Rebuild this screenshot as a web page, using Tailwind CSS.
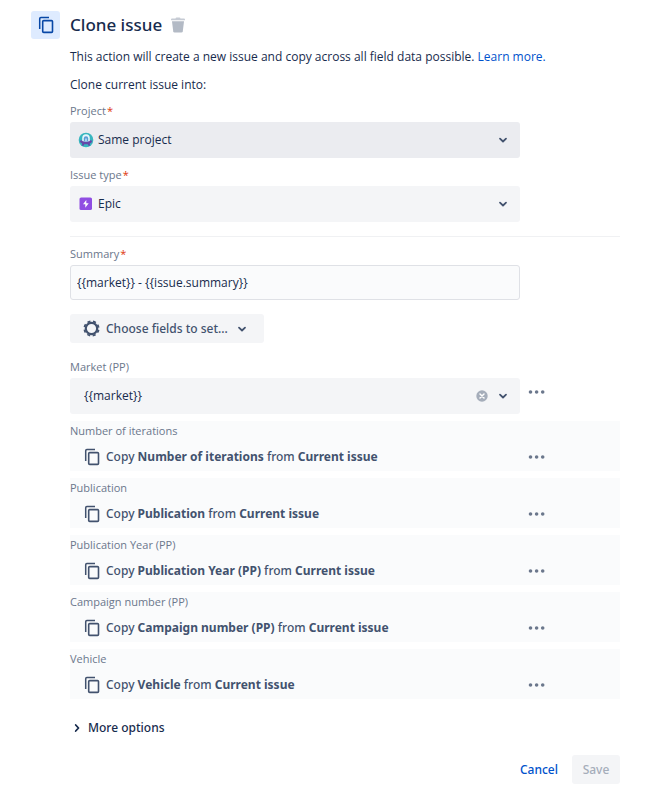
<!DOCTYPE html>
<html lang="en">
<head>
    <meta charset="UTF-8">
    <meta name="viewport" content="width=device-width, initial-scale=1.0">
    <title>Clone issue</title>
    <script src="https://cdn.jsdelivr.net/npm/@tailwindcss/browser@4"></script>
</head>
<body class="bg-white font-['Open_Sans','Noto_Sans',sans-serif] text-[12px] leading-5 text-[#172b4d]">

    <!-- Shared icons -->
    <svg class="hidden">
        <symbol id="copy" viewBox="0 0 16 18">
            <path d="M1.7 13V2.8Q1.7 1.6 2.9 1.6H11" fill="none" stroke="currentColor" stroke-width="1.5"/>
            <rect x="4.7" y="4.6" width="9.8" height="11.8" rx="1" fill="none" stroke="currentColor" stroke-width="1.6"/>
        </symbol>
        <symbol id="chevron" viewBox="0 0 10 10">
            <path d="M2 3.7L5 6.5L8 3.7" fill="none" stroke="currentColor" stroke-width="1.8" stroke-linecap="round" stroke-linejoin="round"/>
        </symbol>
        <symbol id="dots" viewBox="0 0 18 6">
            <circle cx="2.5" cy="3" r="1.8" fill="currentColor"/>
            <circle cx="8.6" cy="3" r="1.8" fill="currentColor"/>
            <circle cx="14.7" cy="3" r="1.8" fill="currentColor"/>
        </symbol>
    </svg>

    <form class="flex gap-[10px] pt-[11px] pr-7 pb-7 pl-[31px]">
        <div class="flex h-7 w-[29px] shrink-0 items-center justify-center rounded-[3px] bg-[#deebff] text-[#0747a6]">
            <svg class="h-[18px] w-4"><use href="#copy"/></svg>
        </div>

        <div class="min-w-0 flex-1">
            <div class="flex h-7 items-center gap-2">
                <h1 class="font-['Noto_Sans',sans-serif] text-[17px] font-medium">Clone issue</h1>
                <button type="button" aria-label="Delete" class="text-[#b3bac5]">
                    <svg class="h-4 w-4" viewBox="0 0 16 16" fill="currentColor">
                        <path d="M1 2.5Q1 1.5 2 1.5H5.5Q5.8 .5 6.5 .5H9.5Q10.2 .5 10.5 1.5H14Q15 1.5 15 2.5V3.3H1z" opacity=".75"/>
                        <path d="M2 4.3H14L12.8 14.3Q12.6 15.5 11.4 15.5H4.6Q3.4 15.5 3.2 14.3z"/>
                    </svg>
                </button>
            </div>

            <p class="mt-2">This action will create a new issue and copy across all field data possible. <a href="#" class="text-[#0052cc]">Learn more.</a></p>
            <p class="mt-2">Clone current issue into:</p>

            <!-- Target project and type -->
            <div class="mt-2 max-w-[450px]">
                <label for="project" class="mb-[3px] block text-[11px] leading-4 text-[#6b778c]">Project<span class="ml-px text-[#de350b]">*</span></label>
                <div class="relative">
                    <select id="project" class="block h-9 w-full appearance-none rounded-[3px] bg-[#ebecf0] pr-8 pl-7">
                        <option>Same project</option>
                    </select>
                    <svg class="pointer-events-none absolute top-[10px] left-2 h-4 w-4" viewBox="0 0 16 16">
                        <circle cx="8" cy="8" r="7.3" fill="#38b6bf"/>
                        <path d="M1.8 8.8Q8 6.8 14.2 8.8Q14 11 11.8 11.5L12 13.8H10.4L9.8 12.3H6.2L5.6 13.8H4L4.2 11.5Q2 11 1.8 8.8z" fill="#6647a8"/>
                        <path d="M4.2 9V6Q4.2 2.2 8 2.2T11.8 6V9Q8 10.6 4.2 9z" fill="#e5f6fa"/>
                        <path d="M5.8 9.2V6.4Q5.8 4.3 8 4.3T10.2 6.4V9.2Q8 10 5.8 9.2z" fill="#5b9bd5"/>
                        <path d="M7 9.3V6.5H9V9.3z" fill="#a7d3ee"/>
                    </svg>
                    <svg class="pointer-events-none absolute top-[13px] right-3 h-[10px] w-[10px] text-[#42526e]"><use href="#chevron"/></svg>
                </div>
            </div>

            <div class="mt-[9px] max-w-[450px]">
                <label for="type" class="mb-[3px] block text-[11px] leading-4 text-[#6b778c]">Issue type<span class="ml-px text-[#de350b]">*</span></label>
                <div class="relative">
                    <select id="type" class="block h-9 w-full appearance-none rounded-[3px] bg-[#f4f5f7] pr-8 pl-7">
                        <option>Epic</option>
                    </select>
                    <svg class="pointer-events-none absolute top-[10px] left-2 h-4 w-4" viewBox="0 0 16 16">
                        <rect x="1.5" y="1.5" width="12.5" height="12.5" rx="1.6" fill="#904ee2"/>
                        <path d="M8.3 4L5 8.3H7.3V11.8L10.7 7.3H8.3z" fill="#fff"/>
                    </svg>
                    <svg class="pointer-events-none absolute top-[13px] right-3 h-[10px] w-[10px] text-[#42526e]"><use href="#chevron"/></svg>
                </div>
            </div>

            <hr class="mt-[14px] border-[#f0f1f3]">

            <!-- Field values -->
            <div class="mt-[9px] max-w-[450px]">
                <label for="summary" class="mb-[3px] block text-[11px] leading-4 text-[#6b778c]">Summary<span class="ml-px text-[#de350b]">*</span></label>
                <input id="summary" type="text" value="{{market}} - {{issue.summary}}" class="block h-[35px] w-full rounded-[3px] border border-[#dfe1e6] bg-[#fafbfc] px-1.5">
            </div>

            <button type="button" class="mt-[14px] flex h-[29px] items-center rounded-[3px] bg-[#f4f5f7] pr-[17px] pl-[13px] font-['Noto_Sans',sans-serif] font-medium text-[#42526e]">
                <svg class="mr-1.5 h-[17px] w-[17px]" viewBox="0 0 17 17">
                    <circle cx="8.5" cy="8.5" r="5.7" fill="none" stroke="currentColor" stroke-width="2.2"/>
                    <circle cx="8.5" cy="8.5" r="7.2" fill="none" stroke="currentColor" stroke-width="1.7" stroke-dasharray="3.1 2.555" stroke-dashoffset="-1.27"/>
                </svg>
                Choose fields to set...
                <svg class="ml-[9px] h-[10px] w-[10px]"><use href="#chevron"/></svg>
            </button>

            <div class="mt-4">
                <label for="market" class="mb-[3px] block text-[11px] leading-4 text-[#6b778c]">Market (PP)</label>
                <div class="flex">
                    <div class="relative w-full max-w-[450px]">
                        <select id="market" class="block h-9 w-full appearance-none rounded-[3px] bg-[#f4f5f7] pr-14 pl-[14px]">
                            <option>{{market}}</option>
                        </select>
                        <button type="button" aria-label="Clear" class="absolute top-3 right-8 text-[#a5adba]">
                            <svg class="block h-3 w-3" viewBox="0 0 12 12">
                                <circle cx="6" cy="6" r="5.7" fill="currentColor"/>
                                <path d="M4 4L8 8M8 4L4 8" stroke="#fff" stroke-width="1.5" stroke-linecap="round"/>
                            </svg>
                        </button>
                        <svg class="pointer-events-none absolute top-[13px] right-3 h-[10px] w-[10px] text-[#42526e]"><use href="#chevron"/></svg>
                    </div>
                    <button type="button" aria-label="Market (PP) options" class="ml-2 flex h-7 w-[18px] shrink-0 items-center text-[#6b778c]"><svg class="h-1.5 w-[18px]"><use href="#dots"/></svg></button>
                </div>
            </div>

            <!-- Copied fields -->
            <div class="mt-[7px] space-y-[7px]">
                <div class="h-[50px] bg-[#fafbfc] pt-0.5">
                    <div class="text-[11px] leading-4 text-[#6b778c]">Number of iterations</div>
                    <div class="mt-2 flex items-center font-['Noto_Sans',sans-serif] font-medium text-[#42526e]">
                        <div class="flex w-full max-w-[450px] items-center gap-1.5 pl-[14px]">
                            <svg class="h-[18px] w-4"><use href="#copy"/></svg>
                            <span>Copy <b class="font-bold">Number of iterations</b> from <b class="font-bold">Current issue</b></span>
                        </div>
                        <button type="button" aria-label="Number of iterations options" class="ml-2 shrink-0 text-[#6b778c]"><svg class="h-1.5 w-[18px]"><use href="#dots"/></svg></button>
                    </div>
                </div>
                <div class="h-[50px] bg-[#fafbfc] pt-0.5">
                    <div class="text-[11px] leading-4 text-[#6b778c]">Publication</div>
                    <div class="mt-2 flex items-center font-['Noto_Sans',sans-serif] font-medium text-[#42526e]">
                        <div class="flex w-full max-w-[450px] items-center gap-1.5 pl-[14px]">
                            <svg class="h-[18px] w-4"><use href="#copy"/></svg>
                            <span>Copy <b class="font-bold">Publication</b> from <b class="font-bold">Current issue</b></span>
                        </div>
                        <button type="button" aria-label="Publication options" class="ml-2 shrink-0 text-[#6b778c]"><svg class="h-1.5 w-[18px]"><use href="#dots"/></svg></button>
                    </div>
                </div>
                <div class="h-[50px] bg-[#fafbfc] pt-0.5">
                    <div class="text-[11px] leading-4 text-[#6b778c]">Publication Year (PP)</div>
                    <div class="mt-2 flex items-center font-['Noto_Sans',sans-serif] font-medium text-[#42526e]">
                        <div class="flex w-full max-w-[450px] items-center gap-1.5 pl-[14px]">
                            <svg class="h-[18px] w-4"><use href="#copy"/></svg>
                            <span>Copy <b class="font-bold">Publication Year (PP)</b> from <b class="font-bold">Current issue</b></span>
                        </div>
                        <button type="button" aria-label="Publication Year (PP) options" class="ml-2 shrink-0 text-[#6b778c]"><svg class="h-1.5 w-[18px]"><use href="#dots"/></svg></button>
                    </div>
                </div>
                <div class="h-[50px] bg-[#fafbfc] pt-0.5">
                    <div class="text-[11px] leading-4 text-[#6b778c]">Campaign number (PP)</div>
                    <div class="mt-2 flex items-center font-['Noto_Sans',sans-serif] font-medium text-[#42526e]">
                        <div class="flex w-full max-w-[450px] items-center gap-1.5 pl-[14px]">
                            <svg class="h-[18px] w-4"><use href="#copy"/></svg>
                            <span>Copy <b class="font-bold">Campaign number (PP)</b> from <b class="font-bold">Current issue</b></span>
                        </div>
                        <button type="button" aria-label="Campaign number (PP) options" class="ml-2 shrink-0 text-[#6b778c]"><svg class="h-1.5 w-[18px]"><use href="#dots"/></svg></button>
                    </div>
                </div>
                <div class="h-[50px] bg-[#fafbfc] pt-0.5">
                    <div class="text-[11px] leading-4 text-[#6b778c]">Vehicle</div>
                    <div class="mt-2 flex items-center font-['Noto_Sans',sans-serif] font-medium text-[#42526e]">
                        <div class="flex w-full max-w-[450px] items-center gap-1.5 pl-[14px]">
                            <svg class="h-[18px] w-4"><use href="#copy"/></svg>
                            <span>Copy <b class="font-bold">Vehicle</b> from <b class="font-bold">Current issue</b></span>
                        </div>
                        <button type="button" aria-label="Vehicle options" class="ml-2 shrink-0 text-[#6b778c]"><svg class="h-1.5 w-[18px]"><use href="#dots"/></svg></button>
                    </div>
                </div>
            </div>

            <button type="button" aria-expanded="false" class="mt-[19px] flex items-center gap-1.5 pl-0.5 font-['Noto_Sans',sans-serif] font-medium">
                <svg class="h-[10px] w-[10px] -rotate-90"><use href="#chevron"/></svg>
                More options
            </button>

            <div class="mt-[17px] flex justify-end gap-[3px] font-['Noto_Sans',sans-serif] font-medium">
                <button type="button" class="h-[29px] rounded-[3px] px-[11px] text-[#0052cc]">Cancel</button>
                <button type="submit" disabled class="h-[29px] w-12 rounded-[3px] bg-[#f4f5f7] text-[#a5adba]">Save</button>
            </div>
        </div>
    </form>

</body>
</html>
